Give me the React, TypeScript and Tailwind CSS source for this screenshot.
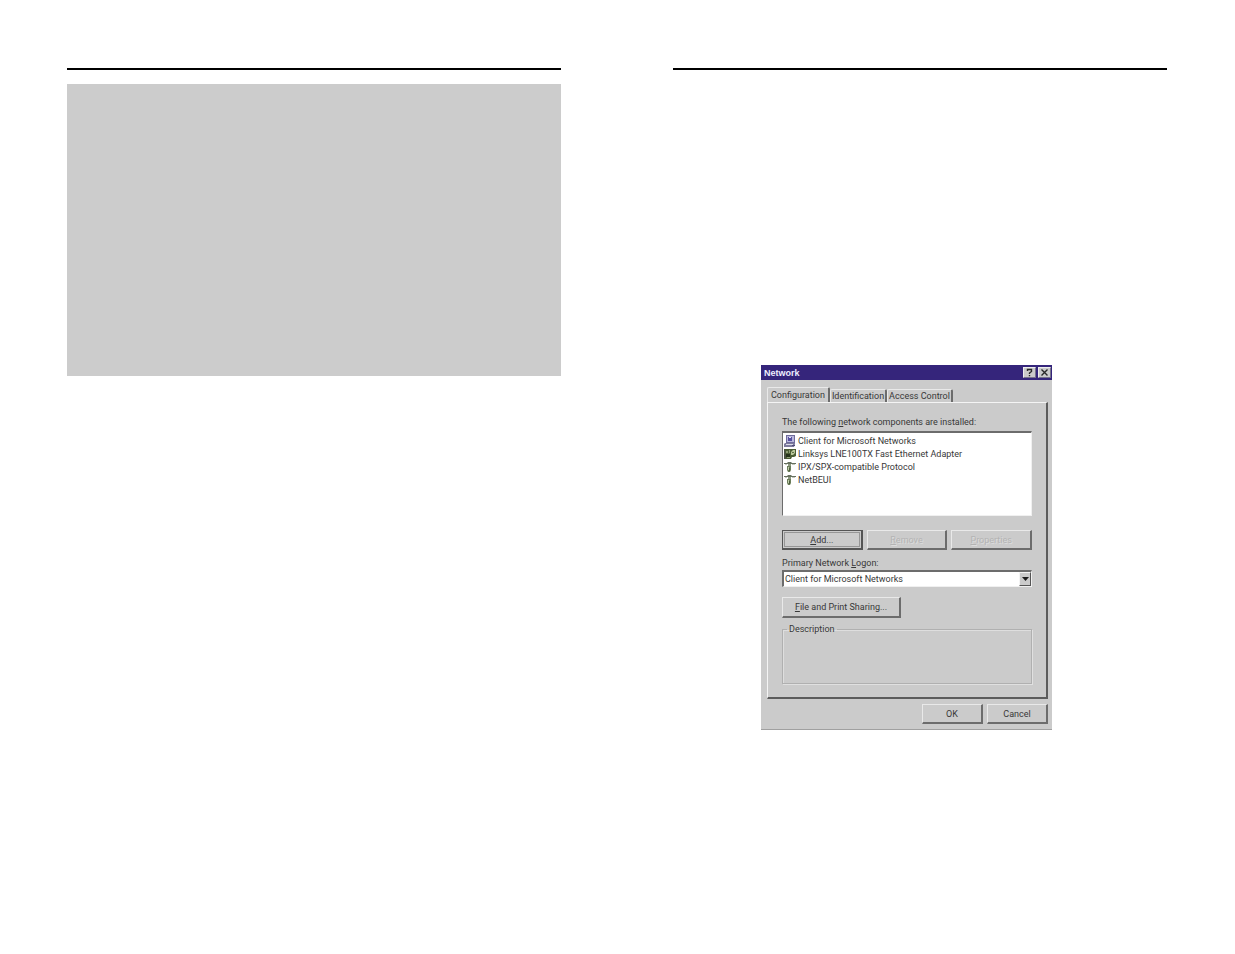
import React, { useState } from "react";

const raised =
  "border border-t-[#e9e9e9] border-l-[#e9e9e9] border-r-2 border-b-2 border-r-[#6c6c6c] border-b-[#6c6c6c] bg-[#cbcbcb]";

const captionButton =
  "flex h-[11px] w-[13px] items-center justify-center border border-[#eeeeee] border-r-[#77738c] border-b-[#77738c] bg-[#cbcbcb]";

function ClientIcon() {
  return (
    <svg viewBox="0 0 12 12" className="h-3 w-3 shrink-0" aria-hidden="true">
      <path d="M2 0h9v8H2z" fill="#6f6c9c" />
      <path d="M3 1h7v6H3z" fill="#b9b8dc" />
      <path d="M4 2h4v4H4z" fill="#5650a0" />
      <path d="M5 2h2v1H5z" fill="#e6e6f6" />
      <path d="M1 8h10v1l-1 3H0V9z" fill="#7d7b9c" />
      <path d="M2 9h7v1H2z" fill="#dcdcea" />
      <path d="M8 10h3v1H8z" fill="#4d4a78" />
    </svg>
  );
}

function AdapterIcon() {
  return (
    <svg viewBox="0 0 12 12" className="h-3 w-3 shrink-0" aria-hidden="true">
      <path d="M0 1h2v10H0z" fill="#4b5145" />
      <path d="M1 1h11v7l-2 1H8l-1 2H2z" fill="#4b5d35" />
      <path d="M2 3h2v2H2zM5 2h1v3H5z" fill="#8d9c75" />
      <path d="M7 4l2-2h2v3L9 7H7z" fill="#b9c79a" />
      <path d="M8 4h2v1H8z" fill="#5f7047" />
      <path d="M2 6h4v3H2z" fill="#26331b" />
      <path d="M3 9h3v1H3z" fill="#8d9c75" />
    </svg>
  );
}

function ProtocolIcon() {
  return (
    <svg viewBox="0 0 12 12" className="h-3 w-3 shrink-0" aria-hidden="true">
      <path d="M0 2h3l1-1h3l1 1h4v1H0z" fill="#66705f" />
      <path d="M1 3h2v1H1zM8 3h3v1H8z" fill="#c3c8bc" />
      <path d="M4 3h3v2H4z" fill="#8c9880" />
      <path d="M3 5h4v4l-1 2H4L3 9z" fill="#6b7d5a" />
      <path d="M4 6h1v3H4z" fill="#c0cdab" />
      <path d="M5 7h1v3H5z" fill="#4b5d3a" />
    </svg>
  );
}

const components = [
  { name: "Client for Microsoft Networks", Icon: ClientIcon },
  { name: "Linksys LNE100TX Fast Ethernet Adapter", Icon: AdapterIcon },
  { name: "IPX/SPX-compatible Protocol", Icon: ProtocolIcon },
  { name: "NetBEUI", Icon: ProtocolIcon },
];

const tabs = [
  { name: "Configuration", width: "w-[63px]" },
  { name: "Identification", width: "w-[57px]" },
  { name: "Access Control", width: "w-[66px]" },
];

function NetworkDialog() {
  const [tab, setTab] = useState(0);
  return (
    <section
      aria-label="Network"
      className="w-[291px] max-w-full border-b border-b-[#a0a0a0] bg-[#cbcbcb] font-[Roboto,'Liberation_Sans',sans-serif] text-[9px] leading-3 text-[#383838]"
    >
      <header className="flex h-[15px] items-center justify-between bg-[#35257b] pr-px pl-[3px]">
        <h1 className="font-['Liberation_Sans',sans-serif] text-[9px] font-bold text-[#eeeeff]">Network</h1>
        <div className="flex gap-[2px]">
          <button aria-label="Help" className={captionButton}>
            <svg viewBox="0 0 9 9" className="h-[9px] w-[9px]" aria-hidden="true">
              <path d="M2.5 3V1.5h4v2L4.5 5v1M4.500 7v1.300" fill="none" stroke="#292929" strokeWidth="1.4" />
            </svg>
          </button>
          <button aria-label="Close" className={captionButton}>
            <svg viewBox="0 0 9 9" className="h-[9px] w-[9px]" aria-hidden="true">
              <path d="M1.5 1.5l6 6M7.5 1.5l-6 6" stroke="#292929" strokeWidth="1.4" />
            </svg>
          </button>
        </div>
      </header>

      <div className="pt-[7px] pr-1 pb-[5px] pl-[6px]">
        <div role="tablist" className="flex items-end">
          {tabs.map(({ name, width }, i) => (
            <button
              key={name}
              role="tab"
              aria-selected={i === tab}
              onClick={() => setTab(i)}
              className={
                "flex items-center justify-center rounded-t-[2px] border-t border-l border-r-2 border-t-[#e9e9e9] border-r-[#6c6c6c] border-l-[#e9e9e9] whitespace-nowrap " +
                width +
                (i === tab ? " h-[15px]" : " h-[13px]")
              }
            >
              {name}
            </button>
          ))}
        </div>

        <div
          role="tabpanel"
          className="flex flex-col items-stretch border-t border-l border-r-2 border-b-2 border-t-[#f4f4f4] border-r-[#5c5c5c] border-b-[#5c5c5c] border-l-[#f4f4f4] pt-[13px] pr-[14px] pb-[13px] pl-[14px]"
        >
          <p id="installed" className="whitespace-nowrap">
            The following <u>n</u>etwork components are installed:
          </p>
          <ul
            aria-labelledby="installed"
            className="mt-[3px] h-[85px] border-t-2 border-r border-b border-l border-t-[#6c6c6c] border-r-[#f0f0f0] border-b-[#f0f0f0] border-l-[#6c6c6c] bg-white pt-px"
          >
            {components.map(({ name, Icon }) => (
              <li key={name} className="flex h-[13px] items-center gap-[2px] pl-px whitespace-nowrap">
                <Icon />
                {name}
              </li>
            ))}
          </ul>

          <div className="mt-[14px] grid grid-cols-3 gap-1">
            <button className="h-5 border border-r-2 border-b-2 border-[#555555] bg-[#cbcbcb] p-px">
              <span className="flex h-full items-center justify-center border border-[#969696]">
                <span>
                  <u>A</u>dd...
                </span>
              </span>
            </button>
            <button disabled className={"h-5 text-[#b4b4b4] [text-shadow:1px_1px_0_#dddddd] " + raised}>
              <u>R</u>emove
            </button>
            <button disabled className={"h-5 text-[#b4b4b4] [text-shadow:1px_1px_0_#dddddd] " + raised}>
              <u>P</u>roperties
            </button>
          </div>

          <label htmlFor="logon" className="mt-[7px]">
            Primary Network <u>L</u>ogon:
          </label>
          <div className="relative mt-px">
            <select
              id="logon"
              className="block h-[17px] w-full appearance-none border-t-2 border-r border-b border-l-2 border-t-[#6c6c6c] border-r-[#f0f0f0] border-b-[#f0f0f0] border-l-[#6c6c6c] bg-white pl-px text-[9px] leading-3"
            >
              <option>Client for Microsoft Networks</option>
            </select>
            <span
              aria-hidden="true"
              className="pointer-events-none absolute top-[2px] right-px flex h-[14px] w-3 items-center justify-center border border-t-[#f4f4f4] border-r-[#555555] border-b-[#555555] border-l-[#f4f4f4] bg-[#cbcbcb]"
            >
              <svg viewBox="0 0 7 4" className="h-1 w-[7px]">
                <path d="M0 0h7L3.5 4z" fill="#1c1c1c" />
              </svg>
            </span>
          </div>

          <button className={"mt-[10px] h-[21px] w-[119px] self-start " + raised}>
            <u>F</u>ile and Print Sharing...
          </button>

          <fieldset className="mt-[5px] h-[61px] border border-[#b0b0b0] pl-1 shadow-[inset_1px_1px_0_#dedede,1px_1px_0_#e0e0e0]">
            <legend className="px-[2px]">Description</legend>
          </fieldset>
        </div>
      </div>

      <footer className="flex justify-end gap-1 pr-1 pb-[5px]">
        <button className={"h-5 w-[61px] " + raised}>OK</button>
        <button className={"h-5 w-[61px] " + raised}>Cancel</button>
      </footer>
    </section>
  );
}

export default function App() {
  return (
    <main className="grid min-h-screen grid-cols-2 gap-[112px] bg-white pt-[68px] pr-[68px] pb-10 pl-[67px]">
      <article>
        <hr className="border-t-2 border-black" />
        <div className="mt-[14px] h-[292px] bg-[#cccccc]" />
      </article>
      <article>
        <hr className="border-t-2 border-black" />
        <div className="mt-[295px] ml-[88px]">
          <NetworkDialog />
        </div>
      </article>
    </main>
  );
}
